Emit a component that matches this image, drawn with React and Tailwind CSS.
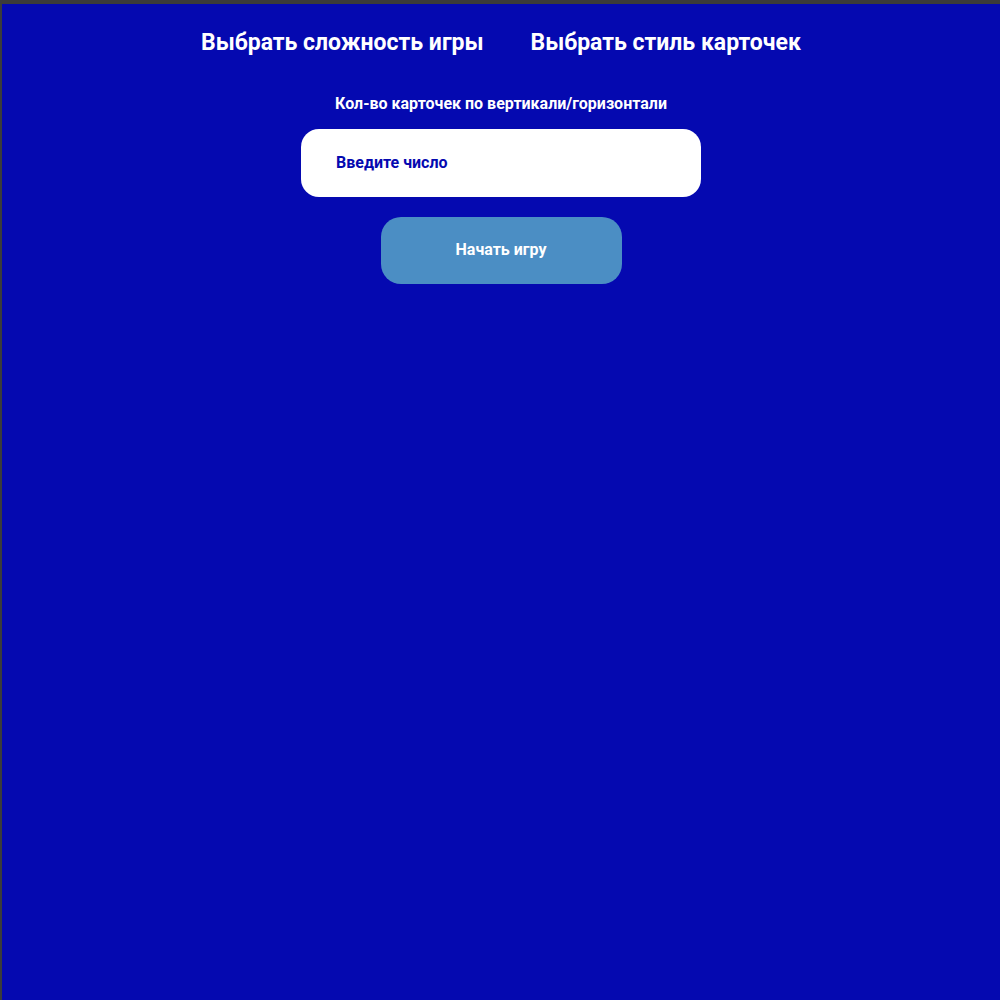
export default function App() {
  return (
    <div
      className="w-[1000px] h-[1000px] bg-[#0509b0] border-t-4 border-l-2 border-[#3b3b3b] flex flex-col items-center"
      style={{ fontFamily: "Roboto, 'Noto Sans', sans-serif" }}
    >
      <div className="flex gap-[47px] mt-[25px]">
        <button className="text-white font-bold text-[23px] leading-[28px] cursor-pointer">Выбрать сложность игры</button>
        <button className="text-white font-bold text-[23px] leading-[28px] cursor-pointer">Выбрать стиль карточек</button>
      </div>
      <div className="mt-[37px] text-white font-bold text-[16px] leading-[20px]">
        Кол-во карточек по вертикали/горизонтали
      </div>
      <input
        placeholder="Введите число"
        className="mt-[15px] w-[400px] h-[68px] bg-white rounded-[18px] pl-[35px] pb-[2px] text-[16px] font-bold text-[#0509b0] placeholder:text-[#0509b0] outline-none"
      />
      <button className="mt-[20px] w-[241px] h-[67px] bg-[#4b8ec4] rounded-[20px] pb-[2px] text-white font-bold text-[16px]">
        Начать игру
      </button>
    </div>
  );
}
